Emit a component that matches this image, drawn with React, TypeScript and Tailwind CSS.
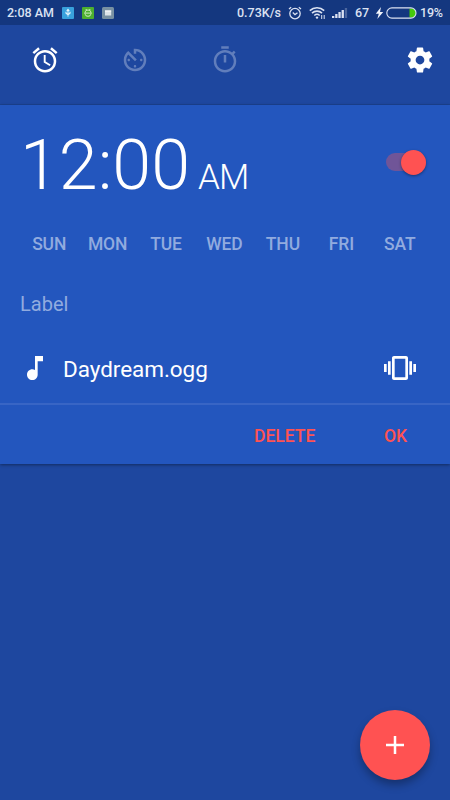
import React from "react";
import { MdAlarm, MdAvTimer, MdMusicNote, MdVibration } from "react-icons/md";

const days = ["SUN", "MON", "TUE", "WED", "THU", "FRI", "SAT"];

function StatusBar() {
  return (
    <div className="flex h-[25px] items-center bg-[#14377f] text-[12.5px] font-medium leading-none text-[#dbe2f2]">
      <span className="ml-[7px] w-[48px] whitespace-nowrap pt-px">2:08 AM</span>
      <svg className="ml-[7px] h-3 w-3 shrink-0" viewBox="0 0 12 12">
        <rect width="12" height="12" rx="1" fill="#38a1dc" />
        <path d="M6 2.5v7M4 4.8v1.4l2 1.6 2-1.6V4.8M4.7 4 6 2.4 7.3 4" stroke="#e4f4fc" strokeWidth="1.1" fill="none" />
      </svg>
      <svg className="ml-2 h-3 w-3 shrink-0" viewBox="0 0 12 12">
        <rect width="12" height="12" rx="1" fill="#4caf2e" />
        <path d="M3.3 5.6V4.8a2.7 1.8 0 0 1 5.4 0v.8M3.3 6.8v.6a2.7 1.9 0 0 0 5.4 0v-.6M2 6.1h8M3.8 2l.9 1.2M8.2 2l-.9 1.2" stroke="#d9f2cf" strokeWidth=".9" fill="none" />
      </svg>
      <svg className="ml-2 h-3 w-3 shrink-0" viewBox="0 0 12 12">
        <rect width="12" height="12" rx="1.5" fill="#7890a2" />
        <rect x="3" y="3.5" width="6.2" height="5" fill="#dce3e8" />
        <path d="M3 4h6.2" stroke="#fff" />
      </svg>
      <span className="ml-[123px] w-[45px] whitespace-nowrap pt-px">0.73K/s</span>
      <svg className="ml-[6px] h-[14px] w-[14px] shrink-0" viewBox="0 0 14 14" fill="none" stroke="#dbe2f2" strokeWidth="1.3">
        <circle cx="7" cy="7.6" r="5.2" />
        <path d="m1 3 2.2-1.8M13 3l-2.2-1.8M4.8 6.5 7 8.6l2.5-1.9" />
      </svg>
      <svg className="ml-[7px] h-[14px] w-[17px] shrink-0" viewBox="0 0 17 14" fill="none" stroke="#dbe2f2" strokeWidth="1.6">
        <path d="M.8 4.6a10.5 10.5 0 0 1 14.4 0M3 7.1a7.2 7.2 0 0 1 10 0M5.3 9.5a4 4 0 0 1 5.4 0" />
        <circle cx="8" cy="11.6" r="1.2" fill="#dbe2f2" stroke="none" />
        <path d="M12.7 9v4M15.2 9v4" strokeWidth="1" />
      </svg>
      <svg className="ml-[6px] h-[12px] w-[16px] shrink-0" viewBox="0 0 16 12" fill="#dbe2f2">
        <path d="M0 9h2.3v2H0zM3.2 7h2.3v4H3.2zM6.4 5h2.3v6H6.4zM9.6 3h2.3v8H9.6z" />
        <path d="M12.8 1h2.3v10h-2.3z" opacity=".28" />
      </svg>
      <span className="ml-[7px] w-[15px] pt-px">67</span>
      <svg className="ml-[5px] h-3 w-[9px] shrink-0" viewBox="0 0 9 12" fill="#f0f3fa">
        <path d="M6 0 .8 6.7h3L2.3 12l5.9-7H5z" />
      </svg>
      <svg className="ml-[2px] h-3 w-[31px] shrink-0" viewBox="0 0 31 12">
        <path d="M23.5 1.5h2a4.5 4.5 0 0 1 0 9h-2z" fill="#45c80a" />
        <rect x=".8" y=".9" width="29.2" height="10.2" rx="5.1" fill="none" stroke="#dbe2f2" strokeWidth="1.1" />
      </svg>
      <span className="ml-[3px] pt-px tracking-[-0.2px]">19%</span>
    </div>
  );
}

function TimerIcon() {
  return (
    <svg className="h-[30px] w-[30px]" viewBox="0 0 24 24" fill="currentColor">
      <path d="M15 1H9v2h6V1zm-4 13h2V8h-2v6zm8.03-6.61l1.42-1.42c-.43-.51-.9-.99-1.41-1.41l-1.42 1.42C16.07 4.74 14.12 4 12 4c-4.97 0-9 4.03-9 9s4.02 9 9 9 9-4.03 9-9c0-2.12-.74-4.07-1.97-5.61zM12 20c-3.87 0-7-3.13-7-7s3.13-7 7-7 7 3.13 7 7-3.13 7-7 7z" />
    </svg>
  );
}

function GearIcon() {
  return (
    <svg className="h-[30px] w-[30px]" viewBox="0 0 24 24" fill="white">
      <path d="M19.43 12.98c.04-.32.07-.64.07-.98s-.03-.66-.07-.98l2.11-1.65c.19-.15.24-.42.12-.64l-2-3.46c-.12-.22-.39-.3-.61-.22l-2.49 1c-.52-.4-1.08-.73-1.69-.98l-.38-2.65C14.46 2.18 14.25 2 14 2h-4c-.25 0-.46.18-.49.42l-.38 2.65c-.61.25-1.17.59-1.69.98l-2.49-1c-.23-.09-.49 0-.61.22l-2 3.46c-.13.22-.07.49.12.64l2.11 1.65c-.04.32-.07.65-.07.98s.03.66.07.98l-2.11 1.65c-.19.15-.24.42-.12.64l2 3.46c.12.22.39.3.61.22l2.49-1c.52.4 1.08.73 1.69.98l.38 2.65c.03.24.24.42.49.42h4c.25 0 .46-.18.49-.42l.38-2.65c.61-.25 1.17-.59 1.69-.98l2.49 1c.23.09.49 0 .61-.22l2-3.46c.12-.22.07-.49-.12-.64l-2.11-1.65zM12 15.5c-1.93 0-3.5-1.57-3.5-3.5s1.57-3.5 3.5-3.5 3.5 1.57 3.5 3.5-1.57 3.5-3.5 3.5z" />
    </svg>
  );
}

function Toolbar() {
  return (
    <div className="flex h-[80px] items-start border-b border-[#1b4291] pt-5 text-white">
      <div className="flex w-[90px] justify-center"><MdAlarm size={30} /></div>
      <div className="flex w-[90px] justify-center text-white/30"><MdAvTimer size={30} /></div>
      <div className="flex w-[90px] justify-center text-white/30"><TimerIcon /></div>
      <div className="ml-auto mr-[15px]"><GearIcon /></div>
    </div>
  );
}

export default function App() {
  return (
    <div className="relative flex h-[800px] w-[450px] flex-col overflow-hidden bg-[#1e479f] font-[Roboto,sans-serif]">
      <StatusBar />
      <Toolbar />
      <div className="h-[359px] bg-[#2356be] shadow-[0_1px_3px_rgba(0,0,0,0.4)]">
        <div className="flex h-[116px] items-start justify-between pl-5 pr-6">
          <div className="flex items-baseline pt-[19px] leading-[82px] text-white">
            <span className="text-[70px] font-light">12:00</span>
            <span className="ml-[8px] text-[35px] font-light tracking-[-1px]">AM</span>
          </div>
          <div className="mt-12 flex h-[18px] w-10 items-center justify-end rounded-full bg-[#ff5252]/35">
            <div className="h-[25px] w-[25px] shrink-0 rounded-full bg-[#ff5252] shadow-[0_1px_3px_rgba(0,0,0,0.4)]" />
          </div>
        </div>
        <div className="grid h-[46px] grid-cols-7 items-center pl-5 pr-[21px] text-center text-[17.5px] font-medium tracking-[-0.1px] text-[#91abdf]">
          {days.map((d) => <span key={d}>{d}</span>)}
        </div>
        <div className="flex h-[74px] items-center px-5 text-[20px] text-[#91abdf]">Label</div>
        <div className="flex h-[62px] items-center pb-[8px] pl-[19px] pr-[34px] text-white">
          <MdMusicNote size={32} />
          <span className="ml-[12px] grow pt-[4px] text-[22.5px] tracking-[-0.05px]">Daydream.ogg</span>
          <MdVibration size={32} />
        </div>
        <div className="flex h-[61px] items-center border-t-2 border-[#3865c5] pt-[3px] text-[17.5px] font-medium text-[#ff5252]">
          <span className="ml-[254px]">DELETE</span>
          <span className="ml-auto mr-[43px]">OK</span>
        </div>
      </div>
      <button className="absolute left-[360px] top-[710px] flex h-[70px] w-[70px] items-center justify-center rounded-full bg-[#ff5252] shadow-[0_5px_9px_rgba(0,0,0,0.3)]">
        <svg className="h-[18px] w-[18px]" viewBox="0 0 18 18" stroke="white" strokeWidth="2.5">
          <path d="M9 0v18M0 9h18" />
        </svg>
      </button>
    </div>
  );
}
